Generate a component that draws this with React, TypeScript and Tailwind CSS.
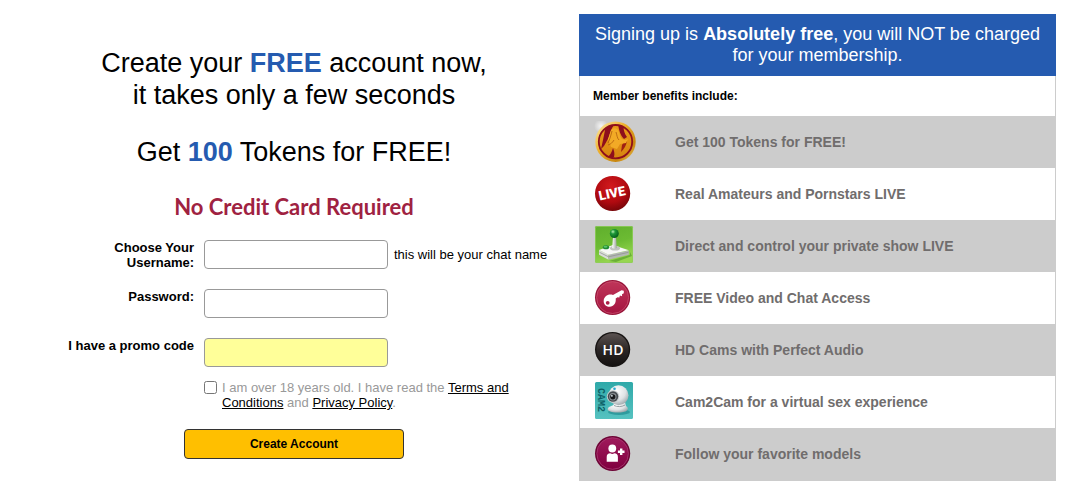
import { useState } from 'react';
import type { FormEvent, ReactNode } from 'react';

interface IconFrameProps {
  children: ReactNode;
}

function IconFrame({ children }: IconFrameProps) {
  return (
    <svg width="42" height="42" viewBox="0 0 42 42" className="shrink-0" aria-hidden="true">
      {children}
    </svg>
  );
}

function TokenIcon() {
  return (
    <IconFrame>
      <defs>
        <linearGradient id="tokenRim" x1="0" y1="0" x2="1" y2="1">
          <stop offset="0" stopColor="#fff0b0" />
          <stop offset="0.4" stopColor="#eeb02c" />
          <stop offset="0.75" stopColor="#c8860f" />
          <stop offset="1" stopColor="#f3cf62" />
        </linearGradient>
        <linearGradient id="tokenGold" x1="0" y1="0" x2="0" y2="1">
          <stop offset="0" stopColor="#e99a18" />
          <stop offset="0.6" stopColor="#e08e14" />
          <stop offset="1" stopColor="#d5840f" />
        </linearGradient>
        <radialGradient id="tokenShine">
          <stop offset="0" stopColor="#fff" stopOpacity="0.8" />
          <stop offset="1" stopColor="#fff" stopOpacity="0" />
        </radialGradient>
        <clipPath id="tokenClip">
          <circle cx="21.5" cy="20.7" r="16.5" />
        </clipPath>
      </defs>
      <circle cx="7" cy="5" r="7" fill="url(#tokenShine)" />
      <circle cx="21.5" cy="20.7" r="20.2" fill="url(#tokenRim)" />
      <circle cx="21.5" cy="20.7" r="17" fill="url(#tokenGold)" />
      <g clipPath="url(#tokenClip)">
        <path d="M12 4h8c-3 4-4 8-5 12l-5 9-3 3 2-9z" fill="#8e0f1c" />
        <path d="M24 3h6c-1 5 0 9 3 13l-3 2c-4-4-5-9-6-15z" fill="#8e0f1c" />
        <path d="M19 27c1 3 2 5 1 9l-7 1c3-3 5-6 6-10z" fill="#8e0f1c" />
        <path d="M30 21l3-1c-1 5-3 8-6 11l1-7z" fill="#a02012" />
        <path d="M17 9c3-3 7-2 8 2 1 3 1 5 3 7l3 1 3-1-2 4-6 1-3 5-6-2-3-8z" fill="#f2aa26" />
        <path d="M18 10c-1 4-2 8-4 12M22 11c1 3 1 6 3 8M20 19c-2 3-3 4-6 5" fill="none" stroke="#a8530c" strokeWidth="0.7" />
      </g>
      <circle cx="21.5" cy="20.7" r="16.7" fill="none" stroke="#8e0f1c" strokeWidth="1.8" />
    </IconFrame>
  );
}

function LiveIcon() {
  return (
    <IconFrame>
      <defs>
        <radialGradient id="liveFill" cx="0.45" cy="0.3" r="0.75">
          <stop offset="0" stopColor="#d21a1d" />
          <stop offset="0.6" stopColor="#b00a10" />
          <stop offset="1" stopColor="#6d0508" />
        </radialGradient>
      </defs>
      <circle cx="18.6" cy="20.5" r="17.6" fill="url(#liveFill)" />
      <text
        x="18"
        y="24.7"
        transform="rotate(-12 18.6 20.5)"
        textAnchor="middle"
        fill="#fff"
        fontFamily="Roboto, sans-serif"
        fontWeight="900"
        fontSize="13"
      >
        LIVE
      </text>
    </IconFrame>
  );
}

function JoystickIcon() {
  return (
    <IconFrame>
      <defs>
        <linearGradient id="stickBg" x1="0" y1="0" x2="0.3" y2="1">
          <stop offset="0" stopColor="#5fae2c" />
          <stop offset="0.55" stopColor="#6cbb33" />
          <stop offset="1" stopColor="#97d650" />
        </linearGradient>
        <radialGradient id="stickBall" cx="0.35" cy="0.3" r="0.7">
          <stop offset="0" stopColor="#b9f0b0" />
          <stop offset="0.35" stopColor="#1f9a3a" />
          <stop offset="1" stopColor="#06601c" />
        </radialGradient>
        <linearGradient id="stickShaft">
          <stop offset="0" stopColor="#fff" />
          <stop offset="1" stopColor="#9aa39a" />
        </linearGradient>
      </defs>
      <rect x="1" y="1" width="38" height="37" rx="1.5" fill="url(#stickBg)" />
      <rect x="1.5" y="1.5" width="37" height="36" rx="1.5" fill="none" stroke="#8fcb5c" strokeWidth="0.8" />
      <path d="M15 36l21-6v-3l2 4-16 6z" fill="#3f8a1e" opacity="0.5" />
      <path d="M5 25l9.5 4.5v5.3L5 29.8z" fill="#d9dcd9" />
      <path d="M14.5 29.5l20.3-4v4.3l-20.3 5z" fill="#b4b8b4" />
      <path d="M5 25l14-5 15.8 5.3-20.3 4.5z" fill="#f6f7f6" />
      <path d="M5.5 27.3l9 4.5 20-4.5" fill="none" stroke="#8b908b" strokeWidth="0.7" />
      <ellipse cx="21" cy="23.3" rx="5" ry="2.3" fill="#c0c4c0" />
      <path d="M19 12h3l.8 11c-1.400 1-3.200 1-4.600 0z" fill="url(#stickShaft)" />
      <ellipse cx="12" cy="22.3" rx="3.2" ry="2" fill="#1f8a34" />
      <ellipse cx="11.5" cy="21.7" rx="2" ry="1" fill="#5cc46a" />
      <circle cx="20.3" cy="8.5" r="4.5" fill="url(#stickBall)" />
    </IconFrame>
  );
}

function KeyIcon() {
  return (
    <IconFrame>
      <defs>
        <linearGradient id="keyFill" x1="0" y1="0" x2="0" y2="1">
          <stop offset="0" stopColor="#bf3559" />
          <stop offset="1" stopColor="#a51540" />
        </linearGradient>
      </defs>
      <circle cx="18.6" cy="20.5" r="17.6" fill="#98153a" />
      <circle cx="18.6" cy="20.5" r="16" fill="url(#keyFill)" stroke="#cf5674" strokeWidth="0.7" />
      <path
        fillRule="evenodd"
        d="M19 18l8.500-4.800 2.300.6v2.400l-1.800 1 .1 2-2.200-.6-.6 2-1.800-.4-1.800 1.300c.6 4.800-2 8-6 8.200-3.800.1-6.200-2.600-6-6 .3-4.400 4.500-7.300 9.300-5.700zM13.700 23.900a1.900 1.900 0 1 0 0 3.800 1.900 1.900 0 0 0 0-3.800z"
        fill="#fff"
      />
    </IconFrame>
  );
}

function HdIcon() {
  return (
    <IconFrame>
      <defs>
        <linearGradient id="hdFill" x1="0" y1="0" x2="0" y2="1">
          <stop offset="0" stopColor="#5a5251" />
          <stop offset="0.5" stopColor="#2c2726" />
          <stop offset="1" stopColor="#151211" />
        </linearGradient>
      </defs>
      <circle cx="18.6" cy="20.5" r="17.6" fill="#171413" />
      <circle cx="18.6" cy="20.5" r="16.2" fill="url(#hdFill)" />
      <text
        x="19"
        y="26"
        textAnchor="middle"
        fill="#fff"
        fontFamily="'Open Sans', sans-serif"
        fontWeight="600"
        fontSize="14"
      >
        HD
      </text>
    </IconFrame>
  );
}

function WebcamIcon() {
  return (
    <IconFrame>
      <defs>
        <linearGradient id="camBg" x1="0" y1="0" x2="0" y2="1">
          <stop offset="0" stopColor="#2fa9a9" />
          <stop offset="1" stopColor="#56c2c0" />
        </linearGradient>
        <radialGradient id="camBody" cx="0.4" cy="0.3" r="0.75">
          <stop offset="0" stopColor="#fff" />
          <stop offset="0.6" stopColor="#dfe3e5" />
          <stop offset="1" stopColor="#9aa3a7" />
        </radialGradient>
      </defs>
      <rect x="1" y="1" width="38" height="37" rx="1.5" fill="url(#camBg)" />
      <text
        x="19"
        y="-4"
        transform="rotate(90)"
        textAnchor="middle"
        fill="#0d5f66"
        fontFamily="'Liberation Mono', monospace"
        fontSize="10"
      >
        CAM2
      </text>
      <ellipse cx="25" cy="31" rx="11" ry="3" fill="#1b8488" opacity="0.6" />
      <path d="M20 21h11l1 4c2 1 2.500 3 1 4.500-3 2.500-13 2.700-18 .5-2-1-1.500-3 0-4l4.500-2z" fill="url(#camBody)" />
      <path d="M20 24.500c3 1.500 8 1.500 11-.5" fill="none" stroke="#8b9599" strokeWidth="0.9" />
      <circle cx="24.5" cy="14.3" r="10" fill="url(#camBody)" />
      <circle cx="19" cy="15.5" r="6.2" fill="#c4cacc" />
      <circle cx="19" cy="15.5" r="5.2" fill="#474c50" />
      <circle cx="18.8" cy="15.8" r="3.7" fill="#8a9094" />
      <circle cx="18.8" cy="15.8" r="2.6" fill="#17191b" />
      <circle cx="17.9" cy="14.8" r="0.9" fill="#e6f2f7" />
      <circle cx="20.5" cy="7.8" r="1.3" fill="#29a8cf" />
    </IconFrame>
  );
}

function FollowIcon() {
  return (
    <IconFrame>
      <defs>
        <linearGradient id="followFill" x1="0" y1="0" x2="0" y2="1">
          <stop offset="0" stopColor="#a01a5c" />
          <stop offset="1" stopColor="#80003f" />
        </linearGradient>
      </defs>
      <circle cx="18.6" cy="20.5" r="17.6" fill="#6e0436" />
      <circle cx="18.6" cy="20.5" r="15.8" fill="url(#followFill)" stroke="#a93a72" strokeWidth="0.8" />
      <circle cx="18.3" cy="15.5" r="3.9" fill="#fff" />
      <path d="M12.700 28.700v-4.700c0-2.500 1.300-3.700 3.600-3.700 1.300.8 2.700.8 4 0 2.300 0 3.600 1.200 3.600 3.700v4.700z" fill="#fff" />
      <path d="M27.200 15.500v6.600M23.900 18.800h6.600" stroke="#fff" strokeWidth="2.4" />
    </IconFrame>
  );
}

const benefits = [
  { text: 'Get 100 Tokens for FREE!', Icon: TokenIcon },
  { text: 'Real Amateurs and Pornstars LIVE', Icon: LiveIcon },
  { text: 'Direct and control your private show LIVE', Icon: JoystickIcon },
  { text: 'FREE Video and Chat Access', Icon: KeyIcon },
  { text: 'HD Cams with Perfect Audio', Icon: HdIcon },
  { text: 'Cam2Cam for a virtual sex experience', Icon: WebcamIcon },
  { text: 'Follow your favorite models', Icon: FollowIcon },
];

interface FieldProps {
  id: string;
  label: string;
  type?: string;
  value: string;
  onChange: (value: string) => void;
  hint?: string;
  highlighted?: boolean;
}

function Field({ id, label, type = 'text', value, onChange, hint, highlighted = false }: FieldProps) {
  return (
    <div className="flex min-h-[30px] items-start gap-[10px]">
      <label htmlFor={id} className="w-[130px] shrink-0 text-right font-bold">
        {label}
      </label>
      <div className="flex items-center gap-[6px]">
        <input
          id={id}
          type={type}
          value={value}
          onChange={(e) => onChange(e.target.value)}
          className={`h-[29px] w-[184px] rounded border border-[#999] px-2 ${highlighted ? 'bg-[#ffff99]' : 'bg-white'}`}
        />
        {hint && <span className="whitespace-nowrap">{hint}</span>}
      </div>
    </div>
  );
}

function SignupForm() {
  const [username, setUsername] = useState('');
  const [password, setPassword] = useState('');
  const [promoCode, setPromoCode] = useState('');
  const [accepted, setAccepted] = useState(false);

  const handleSubmit = (e: FormEvent) => {
    e.preventDefault();
  };

  return (
    <form onSubmit={handleSubmit} className="mt-[18px] text-[13px] leading-[15px]">
      <div className="flex flex-col gap-[19px] pl-[43px]">
        <Field
          id="username"
          label="Choose Your Username:"
          value={username}
          onChange={setUsername}
          hint="this will be your chat name"
        />
        <Field id="password" label="Password:" type="password" value={password} onChange={setPassword} />
        <Field id="promo" label="I have a promo code" value={promoCode} onChange={setPromoCode} highlighted />
      </div>
      <div className="mt-3 flex items-start gap-[5px] pl-[183px]">
        <input
          id="terms"
          type="checkbox"
          checked={accepted}
          onChange={(e) => setAccepted(e.target.checked)}
          className="mt-px size-[13px] shrink-0"
        />
        <label htmlFor="terms" className="max-w-[300px] text-[#999]">
          I am over 18 years old. I have read the{' '}
          <a href="#terms" className="text-black underline">Terms and Conditions</a> and{' '}
          <a href="#privacy" className="text-black underline">Privacy Policy</a>.
        </label>
      </div>
      <div className="mt-[19px] text-center">
        <button
          type="submit"
          className="h-[30px] w-[220px] rounded border border-[#333] bg-[#ffbf00] text-xs font-bold"
        >
          Create Account
        </button>
      </div>
    </form>
  );
}

function BenefitsPanel() {
  return (
    <section className="border-b border-[#ccc]">
      <h2 className="bg-[#255bb0] px-3 py-[10px] text-center text-lg leading-[21px] text-white">
        Signing up is <strong>Absolutely free</strong>, you will NOT be charged for your membership.
      </h2>
      <div className="border-x border-[#ccc]">
        <h3 className="px-[13px] py-3 text-xs font-bold">Member benefits include:</h3>
        <ul>
          {benefits.map(({ text, Icon }) => (
            <li
              key={text}
              className="flex items-center gap-[39px] px-[14px] py-[5px] text-sm font-bold text-[#706d6d] odd:bg-[#ccc]"
            >
              <Icon />
              <span>{text}</span>
            </li>
          ))}
        </ul>
      </div>
    </section>
  );
}

export default function App() {
  return (
    <main className="grid grid-cols-[minmax(0,1fr)_477px] items-start gap-3 bg-white px-[21px] pt-[14px] font-['Liberation_Sans',Arial,sans-serif] text-black">
      <section className="pt-[33px]">
        <div className="text-center text-[27px] leading-8">
          <h1>
            Create your <strong className="text-[#255bb0]">FREE</strong> account now,
            <br />
            it takes only a few seconds
          </h1>
          <p className="mt-[25px]">
            Get <strong className="text-[#255bb0]">100</strong> Tokens for FREE!
          </p>
        </div>
        <p className="mt-6 text-center font-['Lato',sans-serif] text-[22px] leading-[30px] font-bold text-[#9f2241]">
          No Credit Card Required
        </p>
        <SignupForm />
      </section>
      <BenefitsPanel />
    </main>
  );
}
